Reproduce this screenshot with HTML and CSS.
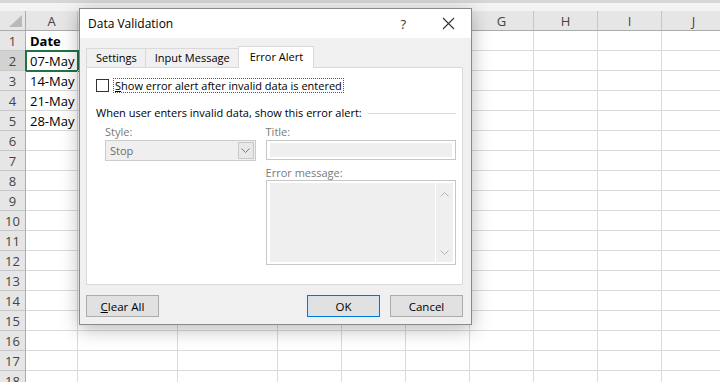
FILE: index.html
```html
<!DOCTYPE html>
<html lang="en">
<head>
  <meta charset="UTF-8">
  <title>Data Validation</title>
  <link rel="stylesheet" href="styles.css">
</head>
<body>
  <div class="sheet">
    <div class="topbar"></div>
    <div class="grid" id="grid"></div>

    <div class="dialog">
      <div class="titlebar">
        <span class="title">Data Validation</span>
        <span class="help">?</span>
        <svg class="close" width="13" height="13" viewBox="0 0 13 13"><path d="M1 1L12 12M12 1L1 12" stroke="#333" stroke-width="1.1" fill="none"/></svg>
      </div>
      <div class="body">
        <div class="tabs">
          <div class="tab">Settings</div>
          <div class="tab">Input Message</div>
          <div class="tab selected">Error Alert</div>
        </div>
        <div class="panel">
          <div class="check-row">
            <span class="checkbox"></span>
            <span class="check-label"><u>S</u>how error alert after invalid data is entered</span>
          </div>
          <div class="group-head">
            <span>When user enters invalid data, show this error alert:</span>
            <span class="rule"></span>
          </div>
          <div class="fields">
            <div class="col-left">
              <div class="label">Style:</div>
              <div class="select">
                <span>Stop</span>
                <span class="arrow">
                  <svg width="9" height="6" viewBox="0 0 9 6"><path d="M0.5 0.5L4.5 4.5L8.5 0.5" stroke="#7a7a7a" fill="none"/></svg>
                </span>
              </div>
            </div>
            <div class="col-right">
              <div class="label">Title:</div>
              <div class="input"><div class="fill"></div></div>
              <div class="label msg">Error message:</div>
              <div class="textarea">
                <div class="fill"></div>
                <div class="scroll">
                  <svg width="9" height="6" viewBox="0 0 9 6"><path d="M0.5 5.5L4.5 1.5L8.5 5.5" stroke="#b5b5b5" fill="none"/></svg>
                  <svg width="9" height="6" viewBox="0 0 9 6"><path d="M0.5 0.5L4.5 4.5L8.5 0.5" stroke="#b5b5b5" fill="none"/></svg>
                </div>
              </div>
            </div>
          </div>
        </div>
        <div class="buttons">
          <button class="btn"><u>C</u>lear All</button>
          <span class="spacer"></span>
          <button class="btn default">OK</button>
          <button class="btn">Cancel</button>
        </div>
      </div>
    </div>
  </div>

  <script>
    const grid = document.getElementById("grid");
    const cols = ["", "A", "B", "C", "D", "E", "F", "G", "H", "I", "J"];
    const data = { 1: "Date", 2: "07-May", 3: "14-May", 4: "21-May", 5: "28-May" };

    // header row (B..F sit under the dialog, so they stay empty)
    cols.forEach(function (c, i) {
      const cell = document.createElement("div");
      cell.className = i === 0 ? "cell corner" : "cell colhead";
      cell.textContent = (i >= 2 && i <= 6) ? "" : c;
      grid.append(cell);
    });

    for (let r = 1; r <= 18; r++) {
      const head = document.createElement("div");
      head.className = r === 2 ? "cell rowhead sel" : "cell rowhead";
      head.textContent = r;
      grid.append(head);
      for (let c = 1; c < cols.length; c++) {
        const cell = document.createElement("div");
        cell.className = "cell";
        if (c === 1 && data[r]) {
          cell.textContent = data[r];
          if (r === 1) cell.classList.add("bold");
          if (r === 2) cell.classList.add("current");
        }
        grid.append(cell);
      }
    }
  </script>
</body>
</html>
```

FILE: styles.css
```css
body {
  margin: 0;
  overflow: hidden;
  background: #fff;
}

.sheet {
  position: relative;
  width: 720px;
  height: 382px;
  overflow: hidden;
}

.topbar {
  height: 11px;
  background: #f3f3f3;
  border-top: 3px solid #d6d6d6;
  box-sizing: border-box;
}

.grid {
  display: grid;
  grid-template-columns: 26px 52px 100px 100px 64px 64px 64px 64px 64px 64px 64px;
  grid-auto-rows: 20px;
  font-family: "Open Sans", sans-serif;
  font-size: 13px;
  color: #000;
}

.cell {
  box-sizing: border-box;
  border-right: 1px solid #dadada;
  border-bottom: 1px solid #dadada;
  padding-left: 4px;
  line-height: 20px;
  white-space: nowrap;
}

.bold {
  font-weight: 700;
}

.current {
  outline: 2px solid #217346;
  outline-offset: -1px;
}

.colhead,
.corner,
.rowhead {
  background: #e6e6e6;
  color: #444;
  padding-left: 0;
  text-align: center;
}

.colhead {
  border-right: 1px solid #c6c6c6;
  border-bottom: 1px solid #ababab;
}

.corner {
  position: relative;
  border-right: 1px solid #ababab;
  border-bottom: 1px solid #ababab;
}

.corner::after {
  content: "";
  position: absolute;
  right: 3px;
  bottom: 3px;
  border-left: 13px solid transparent;
  border-bottom: 12px solid #b9b9b9;
}

.rowhead {
  border-right: 1px solid #ababab;
  border-bottom: 1px solid #c6c6c6;
}

.rowhead.sel {
  background: #d2d2d2;
}

/* dialog */

.dialog {
  position: absolute;
  left: 79px;
  top: 8px;
  width: 393px;
  height: 317px;
  box-sizing: border-box;
  border: 1px solid #8a8a8a;
  background: #f0f0f0;
  box-shadow: 0 4px 18px rgba(0, 0, 0, 0.28);
  font-family: "Open Sans", sans-serif;
  font-size: 11px;
  color: #000;
}

.titlebar {
  height: 29px;
  background: #fff;
  display: flex;
  align-items: center;
  padding-left: 8px;
  padding-right: 16px;
}

.title {
  font-size: 12px;
  flex: 1;
}

.help {
  font-size: 13px;
  color: #333;
  margin-right: 36px;
}

.body {
  padding: 8px 8px 0 6px;
}

.tabs {
  display: flex;
  height: 21px;
  align-items: flex-end;
}

.tab {
  height: 19px;
  line-height: 18px;
  box-sizing: border-box;
  border: 1px solid #d9d9d9;
  border-bottom: none;
  border-right: none;
  padding: 0 8px 0 9px;
  background: #f0f0f0;
}

.tab.selected {
  height: 22px;
  line-height: 20px;
  margin-bottom: -1px;
  border-right: 1px solid #d9d9d9;
  background: #fff;
  position: relative;
  padding: 0 10px 0 11px;
}

.panel {
  height: 218px;
  box-sizing: border-box;
  border: 1px solid #d9d9d9;
  background: #fff;
  padding: 10px 6px 0 9px;
}

.check-row {
  display: flex;
  align-items: center;
  height: 14px;
}

.checkbox {
  width: 13px;
  height: 13px;
  box-sizing: border-box;
  border: 1px solid #333;
  background: #fff;
  margin-right: 4px;
}

.check-label {
  border: 1px dotted #555;
  padding: 0 1px;
  line-height: 13px;
}

.group-head {
  display: flex;
  align-items: center;
  margin-top: 13px;
  gap: 6px;
}

.rule {
  flex: 1;
  border-top: 1px solid #dcdcdc;
  margin-top: 1px;
}

.fields {
  display: flex;
  gap: 10px;
  padding-left: 9px;
  margin-top: 3px;
}

.col-left {
  width: 151px;
}

.col-right {
  width: 191px;
}

.label {
  color: #7a7a7a;
  height: 17px;
  line-height: 17px;
}

.label.msg {
  margin-top: 5px;
  height: 15px;
  line-height: 15px;
}

.select {
  height: 21px;
  box-sizing: border-box;
  border: 1px solid #cccccc;
  background: #efefef;
  display: flex;
  align-items: center;
  padding: 1px 1px 1px 4px;
  color: #6d6d6d;
}

.select span:first-child {
  flex: 1;
}

.arrow {
  width: 16px;
  height: 17px;
  box-sizing: border-box;
  border: 1px solid #c8c8c8;
  background: #e8e8e8;
  display: flex;
  align-items: center;
  justify-content: center;
}

.input {
  height: 20px;
  box-sizing: border-box;
  border: 1px solid #c6c6c6;
  background: #fff;
  padding: 2px 3px;
}

.fill {
  height: 100%;
  background: #efefef;
}

.textarea {
  height: 85px;
  box-sizing: border-box;
  border: 1px solid #c6c6c6;
  background: #fff;
  padding: 2px 2px 2px 3px;
  display: flex;
}

.textarea .fill {
  flex: 1;
  height: auto;
}

.scroll {
  width: 17px;
  background: #efefef;
  border-left: 1px solid #fff;
  display: flex;
  flex-direction: column;
  justify-content: space-between;
  align-items: center;
  padding: 8px 0 6px;
}

.buttons {
  display: flex;
  gap: 10px;
  margin-top: 10px;
}

.spacer {
  flex: 1;
}

.btn {
  width: 73px;
  height: 22px;
  box-sizing: border-box;
  border: 1px solid #adadad;
  background: #e1e1e1;
  font-family: "Open Sans", sans-serif;
  font-size: 11.5px;
  color: #000;
  padding: 0;
}

.btn.default {
  border: 1px solid #0078d7;
  box-shadow: inset 0 0 0 1px #cfe3f5;
}
```
